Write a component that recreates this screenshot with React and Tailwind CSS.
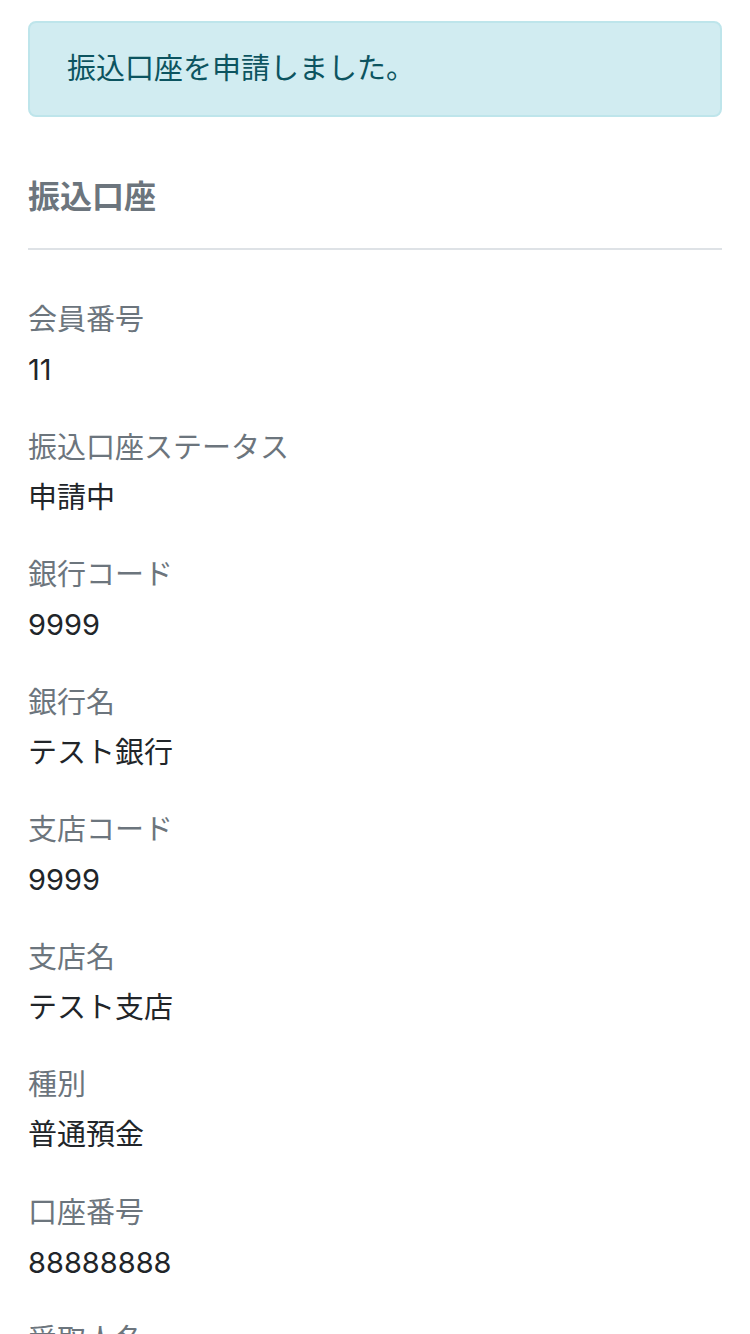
import React from "react";

const fields = [
  { label: "会員番号", value: "11" },
  { label: "振込口座ステータス", value: "申請中" },
  { label: "銀行コード", value: "9999" },
  { label: "銀行名", value: "テスト銀行" },
  { label: "支店コード", value: "9999" },
  { label: "支店名", value: "テスト支店" },
  { label: "種別", value: "普通預金" },
  { label: "口座番号", value: "88888888" },
  { label: "受取人名", value: "テスト" },
];

const App = () => {
  return (
    <div className="min-h-screen bg-white px-[28px] pt-[21px] font-['Inter','Noto_Sans_CJK_JP',sans-serif]">
      <div className="rounded-[8px] border-2 border-[#bee5eb] bg-[#d1ecf1] px-[37px] py-[25px] text-[29px] leading-[42px] text-[#0c5460]">
        振込口座を申請しました。
      </div>

      <h2 className="mt-[56px] text-[32px] font-bold leading-[48px] text-[#6c757d]">
        振込口座
      </h2>
      <hr className="mt-[27px] border-t-2 border-[#dee2e6]" />

      <dl className="mt-[49px]">
        {fields.map((f) => (
          <div key={f.label} className="mb-[35.5px]">
            <dt className="mb-2 text-[29px] leading-[42px] text-[#6c757d]">{f.label}</dt>
            <dd className="text-[29px] leading-[42px] text-[#212529]">{f.value}</dd>
          </div>
        ))}
      </dl>
    </div>
  );
};

export default App;
